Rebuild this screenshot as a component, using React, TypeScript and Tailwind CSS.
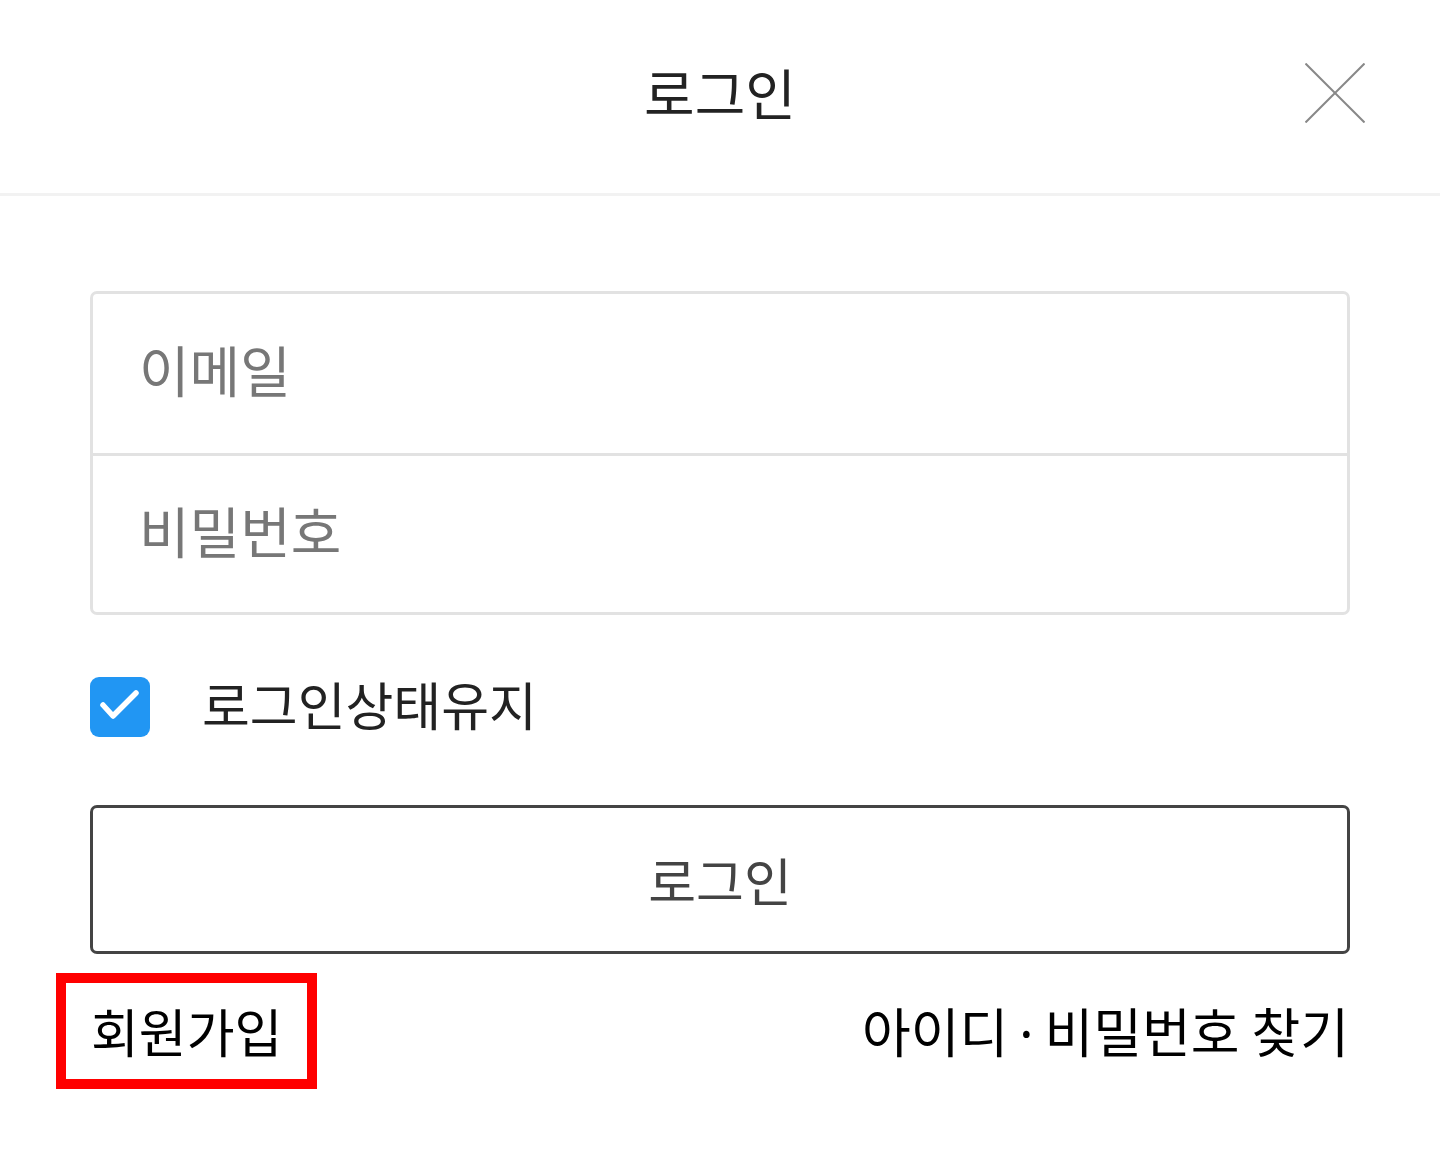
import React from "react";

export default function App() {
  const font = { fontFamily: '"Noto Sans CJK KR", "Noto Sans", sans-serif' };
  return (
    <div className="w-[1440px] h-[1156px] bg-white" style={font}>
      <header className="relative h-[196px] border-b-[3px] border-[#f2f2f2] flex items-center justify-center">
        <h1 className="text-[55px] leading-none text-[#222] -mt-[10px]">로그인</h1>
        <button className="absolute right-[75px] top-[63px] w-[60px] h-[60px]">
          <svg width="60" height="60" viewBox="0 0 60 60">
            <line x1="0.5" y1="0.5" x2="59.5" y2="59.5" stroke="#888" strokeWidth="2" />
            <line x1="59.5" y1="0.5" x2="0.5" y2="59.5" stroke="#888" strokeWidth="2" />
          </svg>
        </button>
      </header>
      <main className="px-[90px] pt-[95px]">
        <div className="border-[3px] border-[#e2e2e2] rounded-[7px]">
          <div className="h-[162px] flex items-center pl-[46px] pb-[10px] border-b-[3px] border-[#e2e2e2]">
            <span className="text-[55px] leading-none text-[#777]">이메일</span>
          </div>
          <div className="h-[156px] flex items-center pl-[46px] pb-[10px]">
            <span className="text-[55px] leading-none text-[#777]">비밀번호</span>
          </div>
        </div>
        <div className="mt-[62px] flex items-center">
          <div className="w-[60px] h-[60px] rounded-[9px] bg-[#2196f3]">
            <svg width="60" height="60" viewBox="0 0 60 60">
              <polyline points="13,28 23,39 46,16" fill="none" stroke="white" strokeWidth="5.5" strokeLinecap="round" strokeLinejoin="round" />
            </svg>
          </div>
          <span className="ml-[52px] mb-[6px] text-[52px] leading-none text-[#222]">로그인상태유지</span>
        </div>
        <button className="mt-[68px] w-full h-[149px] border-[3px] border-[#444] rounded-[7px] flex items-center justify-center">
          <span className="text-[52px] leading-none text-[#444]">로그인</span>
        </button>
        <div className="mt-[19px] flex items-center justify-between">
          <a className="-ml-[34px] w-[261px] h-[116px] border-[10px] border-[#ff0000] flex items-center pl-[25px]">
            <span className="text-[52px] leading-none text-black">회원가입</span>
          </a>
          <a className="text-[53px] leading-none text-black pr-[1px]">
            아이디
            <span className="mx-[11px]" style={{ fontFamily: '"Noto Sans", sans-serif' }}>·</span>
            비밀번호 찾기
          </a>
        </div>
      </main>
    </div>
  );
}
